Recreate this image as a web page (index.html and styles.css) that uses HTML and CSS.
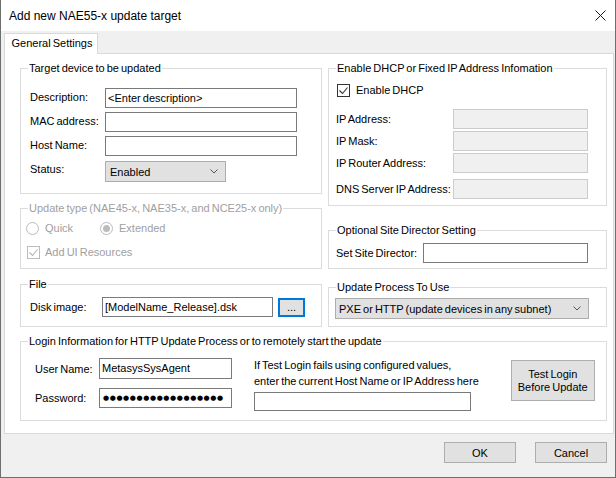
FILE: index.html
```html
<!DOCTYPE html>
<html>
<head>
<meta charset="utf-8">
<title>Add new NAE55-x update target</title>
<link rel="stylesheet" href="styles.css">
</head>
<body>
<div class="window">
  <div class="titlebar">
    <span class="title">Add new NAE55-x update target</span>
    <svg class="close" width="11" height="11" viewBox="0 0 11 11"><path d="M0.5 0.5 L10.5 10.5 M10.5 0.5 L0.5 10.5" stroke="#1a1a1a" stroke-width="1" fill="none"/></svg>
  </div>
  <div class="client">
    <div class="tabstrip"><div class="tab">General Settings</div></div>
    <div class="panel">
      <div class="col">
        <div class="group g-target">
          <div class="legend">Target device to be updated</div>
          <div class="target-grid">
            <span class="lbl">Description:</span><div class="tb w192">&lt;Enter description&gt;</div>
            <span class="lbl">MAC address:</span><div class="tb w192"></div>
            <span class="lbl">Host Name:</span><div class="tb w192"></div>
            <span class="lbl">Status:</span>
            <div class="combo w121"><span>Enabled</span><svg class="chev" width="8" height="5" viewBox="0 0 8 5"><path d="M0.5 0.5 L4 4 L7.5 0.5" stroke="#555" fill="none"/></svg></div>
          </div>
        </div>
        <div class="group g-update disabled">
          <div class="legend">Update type (NAE45-x, NAE35-x, and NCE25-x only)</div>
          <div class="opt-row">
            <span class="opt opt-quick"><span class="radio"></span>Quick</span>
            <span class="opt"><span class="radio on"></span>Extended</span>
          </div>
          <div class="opt-row row-ui">
            <span class="opt opt-cb"><span class="cb dis"><svg width="11" height="11" viewBox="0 0 11 11"><path d="M1.5 5.5 L4.5 8.5 L9.5 2.5" stroke="#b5b5b5" stroke-width="1.1" fill="none"/></svg></span>Add UI Resources</span>
          </div>
        </div>
        <div class="group g-file">
          <div class="legend">File</div>
          <div class="file-row">
            <span class="lbl lbl-disk">Disk image:</span>
            <div class="tb w171">[ModelName_Release].dsk</div>
            <div class="browse">...</div>
          </div>
        </div>
      </div>
      <div class="col">
        <div class="group g-dhcp">
          <div class="legend">Enable DHCP or Fixed IP Address Infomation</div>
          <div class="opt dhcp-check"><span class="cb"><svg width="11" height="11" viewBox="0 0 11 11"><path d="M1.5 5.5 L4.5 8.5 L9.5 2.5" stroke="#333" stroke-width="1.1" fill="none"/></svg></span>Enable DHCP</div>
          <div class="ip-grid">
            <span class="lbl">IP Address:</span><div class="tb dis"></div>
            <span class="lbl">IP Mask:</span><div class="tb dis"></div>
            <span class="lbl">IP Router Address:</span><div class="tb dis"></div>
            <span class="lbl last">DNS Server IP Address:</span><div class="tb dis last"></div>
          </div>
        </div>
        <div class="group g-site">
          <div class="legend">Optional Site Director Setting</div>
          <div class="site-row">
            <span class="lbl lbl-site">Set Site Director:</span>
            <div class="tb w165"></div>
          </div>
        </div>
        <div class="group g-proc">
          <div class="legend">Update Process To Use</div>
          <div class="combo w254 proc-combo"><span>PXE or HTTP (update devices in any subnet)</span><svg class="chev" width="8" height="5" viewBox="0 0 8 5"><path d="M0.5 0.5 L4 4 L7.5 0.5" stroke="#555" fill="none"/></svg></div>
        </div>
      </div>
      <div class="group login">
        <div class="legend">Login Information for HTTP Update Process or to remotely start the update</div>
        <div class="login-row">
          <div class="cred-grid">
            <span class="lbl">User Name:</span><div class="tb w133 h21">MetasysSysAgent</div>
            <span class="lbl">Password:</span><div class="tb w133 pw">●●●●●●●●●●●●●●●●●●</div>
          </div>
          <div class="alt">
            <div class="alt-text">If Test Login fails using configured values,<br>enter the current Host Name or IP Address here</div>
            <div class="tb w217 h19"></div>
          </div>
          <div class="btn test-btn">Test Login<br>Before Update</div>
        </div>
      </div>
    </div>
    <div class="footer">
      <div class="btn">OK</div>
      <div class="btn">Cancel</div>
    </div>
  </div>
</div>
</body>
</html>
```
FILE: styles.css
```css
* { box-sizing: border-box; }
html, body { margin: 0; padding: 0; }
body {
  font-family: "Liberation Sans", Arial, sans-serif;
  font-size: 11px;
  word-spacing: -1px;
  color: #000;
  background: #fff;
}
.window {
  width: 616px;
  height: 478px;
  border: 1px solid #6e6e6e;
  border-top: none;
  display: flex;
  flex-direction: column;
  background: #f0f0f0;
}
.titlebar {
  height: 31px;
  flex: none;
  background: #fff;
  display: flex;
  align-items: center;
  justify-content: space-between;
  padding: 0 9px 0 8px;
}
.title { font-size: 12px; word-spacing: normal; }
.client { flex: 1; display: flex; flex-direction: column; }
.tabstrip { display: flex; padding: 2px 0 0 3px; }
.tab {
  width: 94px;
  height: 21px;
  margin-bottom: -1px;
  background: #fff;
  border: 1px solid #d9d9d9;
  border-bottom: none;
  text-align: center;
  line-height: 19px;
  padding-left: 2px;
  position: relative;
  z-index: 1;
}
.panel {
  margin-left: 3px;
  width: 610px;
  height: 381px;
  background: #fff;
  border: 1px solid #d9d9d9;
  padding: 14px 0 0 15px;
  display: grid;
  grid-template-columns: 302px 279px;
  column-gap: 6px;
  row-gap: 14px;
  align-content: start;
}
.col { display: flex; flex-direction: column; }
.group { border: 1px solid #dcdcdc; }
.legend {
  width: max-content;
  height: 14px;
  line-height: 14px;
  margin: -8px 0 0 7px;
  padding: 0 1px;
  background: #fff;
}
.disabled, .disabled .legend { color: #a0a0a0; }

.g-target { height: 126px; }
.g-update { height: 61px; margin-top: 14px; }
.g-file { height: 43px; margin-top: 15px; }
.g-dhcp { height: 138px; }
.g-site { height: 39px; margin-top: 24px; }
.g-proc { height: 40px; margin-top: 18px; }
.login { grid-column: 1 / -1; height: 80px; }

.lbl { white-space: nowrap; }
.tb {
  height: 20px;
  border: 1px solid #7a7a7a;
  background: #fff;
  padding: 0 2px;
  line-height: 18px;
  white-space: nowrap;
  overflow: hidden;
}
.tb.dis { border-color: #cccccc; background: #f0f0f0; }
.h21 { height: 21px; line-height: 19px; }
.h19 { height: 19px; }
.w192 { width: 192px; }
.w171 { width: 171px; }
.w165 { width: 165px; }
.w133 { width: 133px; }
.w217 { width: 217px; }
.w121 { width: 121px; }
.w254 { width: 254px; }

.combo {
  height: 21px;
  border: 1px solid #adadad;
  background: #e1e1e1;
  display: flex;
  align-items: center;
  justify-content: space-between;
  padding: 0 7px 0 4px;
  white-space: nowrap;
}
.chev { flex: none; }

.target-grid {
  display: grid;
  grid-template-columns: 75px auto;
  row-gap: 4px;
  margin: 13px 0 0 9px;
  justify-items: start;
}
.target-grid .lbl { line-height: 18px; }
.target-grid .combo { margin-top: 1px; }

.opt-row { display: flex; align-items: center; height: 16px; margin: 5px 0 0 5px; }
.row-ui { margin-top: 8px; }
.opt { display: flex; align-items: center; gap: 6px; }
.opt-quick { width: 74px; }
.opt-cb { margin-left: 1px; gap: 5px; }
.radio {
  width: 13px; height: 13px;
  border: 1px solid #bcbcbc;
  border-radius: 50%;
  background: #fff;
  display: flex; align-items: center; justify-content: center;
}
.radio.on::after {
  content: "";
  width: 7px; height: 7px;
  border-radius: 50%;
  background: #bcbcbc;
}
.cb {
  width: 13px; height: 13px;
  border: 1px solid #333;
  background: #fff;
  display: flex; align-items: center; justify-content: center;
}
.cb.dis { border-color: #bcbcbc; }

.file-row { display: flex; align-items: center; margin: 6px 0 0 9px; }
.lbl-disk { width: 72px; }
.browse {
  width: 27px; height: 19px;
  margin-left: 5px;
  border: 2px solid #0078d7;
  background: #e1e1e1;
  display: flex; align-items: center; justify-content: center;
  line-height: 1;
}

.dhcp-check { height: 16px; margin: 7px 0 0 8px; }
.ip-grid {
  display: grid;
  grid-template-columns: 117px 135px;
  row-gap: 2px;
  margin: 11px 0 0 7px;
  align-items: center;
}
.ip-grid .last { margin-top: 4px; }

.site-row { display: flex; align-items: center; margin: 6px 0 0 7px; }
.lbl-site { width: 87px; }

.proc-combo { margin: 4px 0 0 6px; padding-left: 3px; }

.login-row { display: flex; align-items: flex-start; margin-left: 14px; }
.cred-grid {
  display: grid;
  grid-template-columns: 64px 133px;
  row-gap: 9px;
  margin-top: 10px;
  align-items: center;
}
.pw {
  font-family: "DejaVu Sans", sans-serif;
  font-size: 7px;
  letter-spacing: 0.6px;
  line-height: 18px;
  padding-left: 3px;
}
.alt { margin: 9px 0 0 22px; }
.alt-text { line-height: 16px; white-space: nowrap; }
.alt .tb { margin-top: 3px; }
.btn {
  width: 72px;
  height: 21px;
  border: 1px solid #adadad;
  background: #e1e1e1;
  display: flex; align-items: center; justify-content: center;
  text-align: center;
}
.test-btn {
  width: 84px;
  height: 41px;
  margin: 12px 0 0 32px;
  line-height: 13px;
}
.footer {
  display: flex;
  justify-content: flex-end;
  gap: 19px;
  padding: 8px 8px 0 0;
}
```
